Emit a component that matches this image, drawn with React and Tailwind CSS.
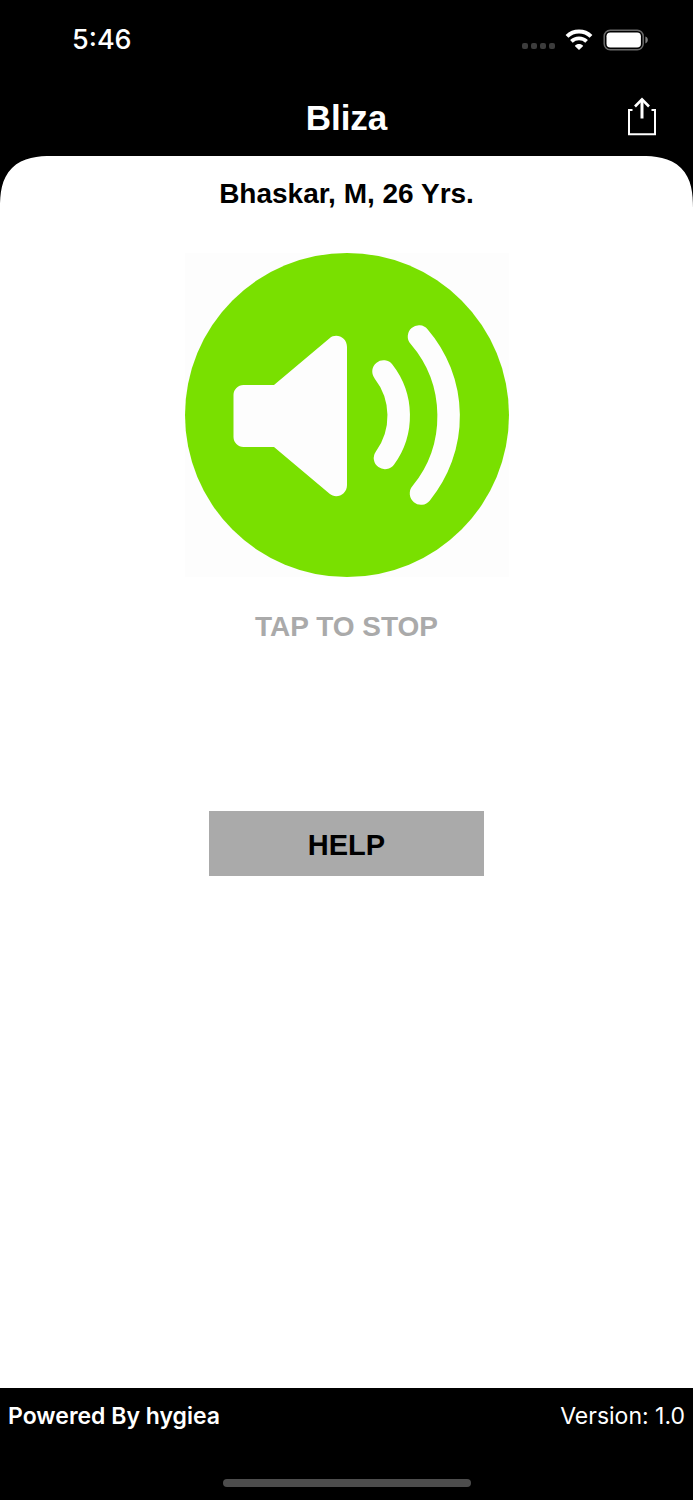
const signalDots = [0, 1, 2, 3];

function WifiIcon() {
  return (
    <svg width="28" height="22" viewBox="0 0 28 22" fill="none" aria-hidden="true">
      <path d="M2 7.4C8.6 0.9 19.4 0.9 26 7.4" stroke="#fff" strokeWidth="4" />
      <path d="M6.4 12.4C10.6 8.4 17.4 8.4 21.6 12.4" stroke="#fff" strokeWidth="3.8" />
      <path d="M14 21L9.8 16.900C12 14.500 16 14.500 18.200 16.900Z" fill="#fff" />
    </svg>
  );
}

function BatteryIcon() {
  return (
    <svg width="46" height="22" viewBox="0 0 46 22" fill="none" aria-hidden="true">
      <rect x="1.2" y="1.2" width="39" height="19.6" rx="6" stroke="#6b6b6b" strokeWidth="1.5" />
      <rect x="3.5" y="3.5" width="34.4" height="15" rx="3.8" fill="#fff" />
      <path d="M42.4 7.6C44 8.2 44.8 9.5 44.8 11C44.8 12.5 44 13.8 42.4 14.4Z" fill="#808080" />
    </svg>
  );
}

function ShareIcon() {
  return (
    <svg width="30" height="40" viewBox="0 0 30 40" fill="none" stroke="#fff" aria-hidden="true">
      <path d="M5.500 14H2V38.2H28V14H24.500" strokeWidth="2" />
      <path d="M15 22.5V3.500" strokeWidth="3" />
      <path d="M8 10.500L15 3.300L22 10.500" strokeWidth="2.6" />
    </svg>
  );
}

function SpeakerIcon() {
  return (
    <svg className="block w-full" viewBox="0 0 324 324" fill="none" aria-hidden="true">
      <circle cx="162" cy="162" r="162" fill="#79e000" />
      <path
        d="M58.5 132H89L144.6 85.2C151 79.8 162 84 162 94V232C162 242 151 246.2 144.6 240.8L89 194H58.5C53 194 48.5 189.5 48.5 184V142C48.5 136.5 53 132 58.5 132Z"
        fill="#fdfdfd"
      />
      <path d="M198.5 118.5A72 72 0 0 1 200 205" stroke="#fdfdfd" strokeWidth="22.5" strokeLinecap="round" />
      <path d="M234 83.5A122 122 0 0 1 236 240.5" stroke="#fdfdfd" strokeWidth="22.5" strokeLinecap="round" />
    </svg>
  );
}

function StatusBar() {
  return (
    <div className="flex h-20 items-center justify-between pr-11 pl-18">
      <span className="font-['Inter',sans-serif] text-[27px] font-medium">5:46</span>
      <div className="flex items-center gap-2.5">
        <div className="flex gap-[3px] pt-3">
          {signalDots.map((dot) => (
            <span key={dot} className="size-1.5 rounded-xs bg-[#3c3c3c]" />
          ))}
        </div>
        <WifiIcon />
        <BatteryIcon />
      </div>
    </div>
  );
}

export default function App() {
  return (
    <div className="flex min-h-screen flex-col bg-black font-['Liberation_Sans',Arial,sans-serif] text-white">
      <StatusBar />

      <header className="grid h-[76px] grid-cols-[1fr_auto_1fr] items-center px-9">
        <h1 className="col-start-2 text-[35px] leading-10 font-bold">Bliza</h1>
        <button type="button" aria-label="Share" className="justify-self-end pb-1">
          <ShareIcon />
        </button>
      </header>

      <main className="flex flex-1 flex-col items-center rounded-t-[52px] bg-white text-black [corner-shape:superellipse(1.4)]">
        <h2 className="mt-5 text-[28px] leading-9 font-bold">Bhaskar, M, 26 Yrs.</h2>

        <button type="button" className="mt-[41px] flex flex-col items-center">
          <span className="block w-[324px] bg-[#fdfdfd]">
            <SpeakerIcon />
          </span>
          <span className="mt-8 text-[28px] leading-9 font-bold text-[#aaa]">TAP TO STOP</span>
        </button>

        <button
          type="button"
          className="mt-[166px] w-[275px] bg-[#aaa] pt-4 pb-[13px] text-[29px] leading-9 font-bold"
        >
          HELP
        </button>
      </main>

      <footer className="flex h-28 flex-col items-center justify-between pt-3 pb-[13px] font-['Inter',sans-serif] text-[23px] leading-8">
        <div className="flex w-full justify-between px-2">
          <span className="font-semibold">Powered By hygiea</span>
          <span>Version: 1.0</span>
        </div>
        <div className="h-2 w-62 rounded-full bg-[#4d4d4d]" />
      </footer>
    </div>
  );
}
